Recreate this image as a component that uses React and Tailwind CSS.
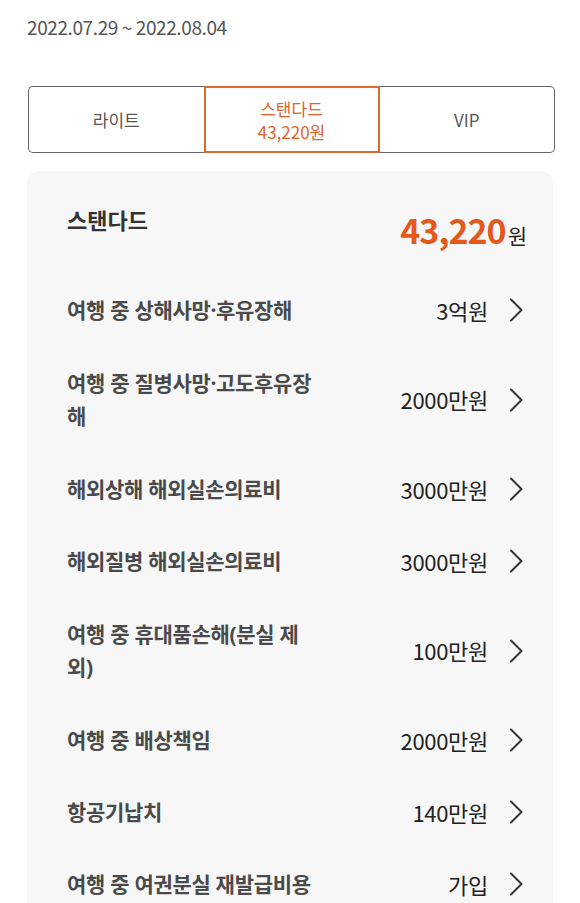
const plans = ["라이트", "스탠다드", "VIP"];

const coverages = [
  { label: "여행 중 상해사망·후유장해", value: "3억원" },
  { label: "여행 중 질병사망·고도후유장\n해", value: "2000만원", tall: true },
  { label: "해외상해 해외실손의료비", value: "3000만원" },
  { label: "해외질병 해외실손의료비", value: "3000만원" },
  { label: "여행 중 휴대품손해(분실 제\n외)", value: "100만원", tall: true },
  { label: "여행 중 배상책임", value: "2000만원" },
  { label: "항공기납치", value: "140만원" },
  { label: "여행 중 여권분실 재발급비용", value: "가입" },
];

const Chevron = () => (
  <svg width="14" height="24" viewBox="0 0 14 24" fill="none">
    <polyline
      points="2,1.5 12.5,12 2,22.5"
      stroke="#333"
      strokeWidth="2"
      strokeLinecap="round"
      strokeLinejoin="round"
    />
  </svg>
);

export default function App() {
  const selected = 1;

  return (
    <div className="w-[580px] min-h-[903px] overflow-hidden bg-white font-['Noto_Sans_CJK_KR','Noto_Sans',sans-serif]">
      <div className="px-[27px] pt-[14px]">
        <p className="text-[19px] leading-[26px] tracking-[-0.4px] text-[#555]">
          2022.07.29 ~ 2022.08.04
        </p>

        <div className="mt-[46px] ml-px flex h-[67px] w-[527px]">
          {plans.map((name, i) =>
            i === selected ? (
              <div
                key={name}
                className="flex w-[176px] flex-col items-center justify-center border-2 border-[#e06a2e] text-[17px] leading-[23px] text-[#e0642a]"
              >
                <span>{name}</span>
                <span>43,220원</span>
              </div>
            ) : (
              <div
                key={name}
                className={
                  "flex flex-1 items-center justify-center border-y-[1.5px] border-[#666] text-[17px] text-[#555] " +
                  (i === 0 ? "rounded-l-[5px] border-l-[1.5px]" : "rounded-r-[5px] border-r-[1.5px]")
                }
              >
                {name}
              </div>
            )
          )}
        </div>
      </div>

      <div className="mx-[27px] mt-[18px] rounded-[12px] bg-[#f7f7f7] pl-[40px] pr-[30px]">
        <div className="flex h-[103px] items-start justify-between pt-[34px]">
          <p className="text-[22px] font-bold leading-[28px] text-[#333]">스탠다드</p>
          <p className="mt-[2px] mr-[-4px] flex items-baseline text-[#222]">
            <span className="text-[34px] font-bold leading-[46px] tracking-[-1px] text-[#e4581c]">43,220</span>
            <span className="ml-[2px] text-[21px]">원</span>
          </p>
        </div>

        {coverages.map((c) => (
          <div
            key={c.label}
            className={"flex items-center justify-between " + (c.tall ? "py-[20.5px]" : "py-[19.5px]")}
          >
            {/* latin font first so "·" stays narrow; hangul falls through to the CJK font */}
            <p className="whitespace-pre-line font-['Noto_Sans','Noto_Sans_CJK_KR',sans-serif] text-[21px] font-bold leading-[33px] tracking-[-0.3px] text-[#4a4a4a]">
              {c.label}
            </p>
            <div className="flex items-center gap-[21px]">
              <span className="text-[22px] tracking-[-0.3px] text-[#222]">{c.value}</span>
              <Chevron />
            </div>
          </div>
        ))}
      </div>
    </div>
  );
}
